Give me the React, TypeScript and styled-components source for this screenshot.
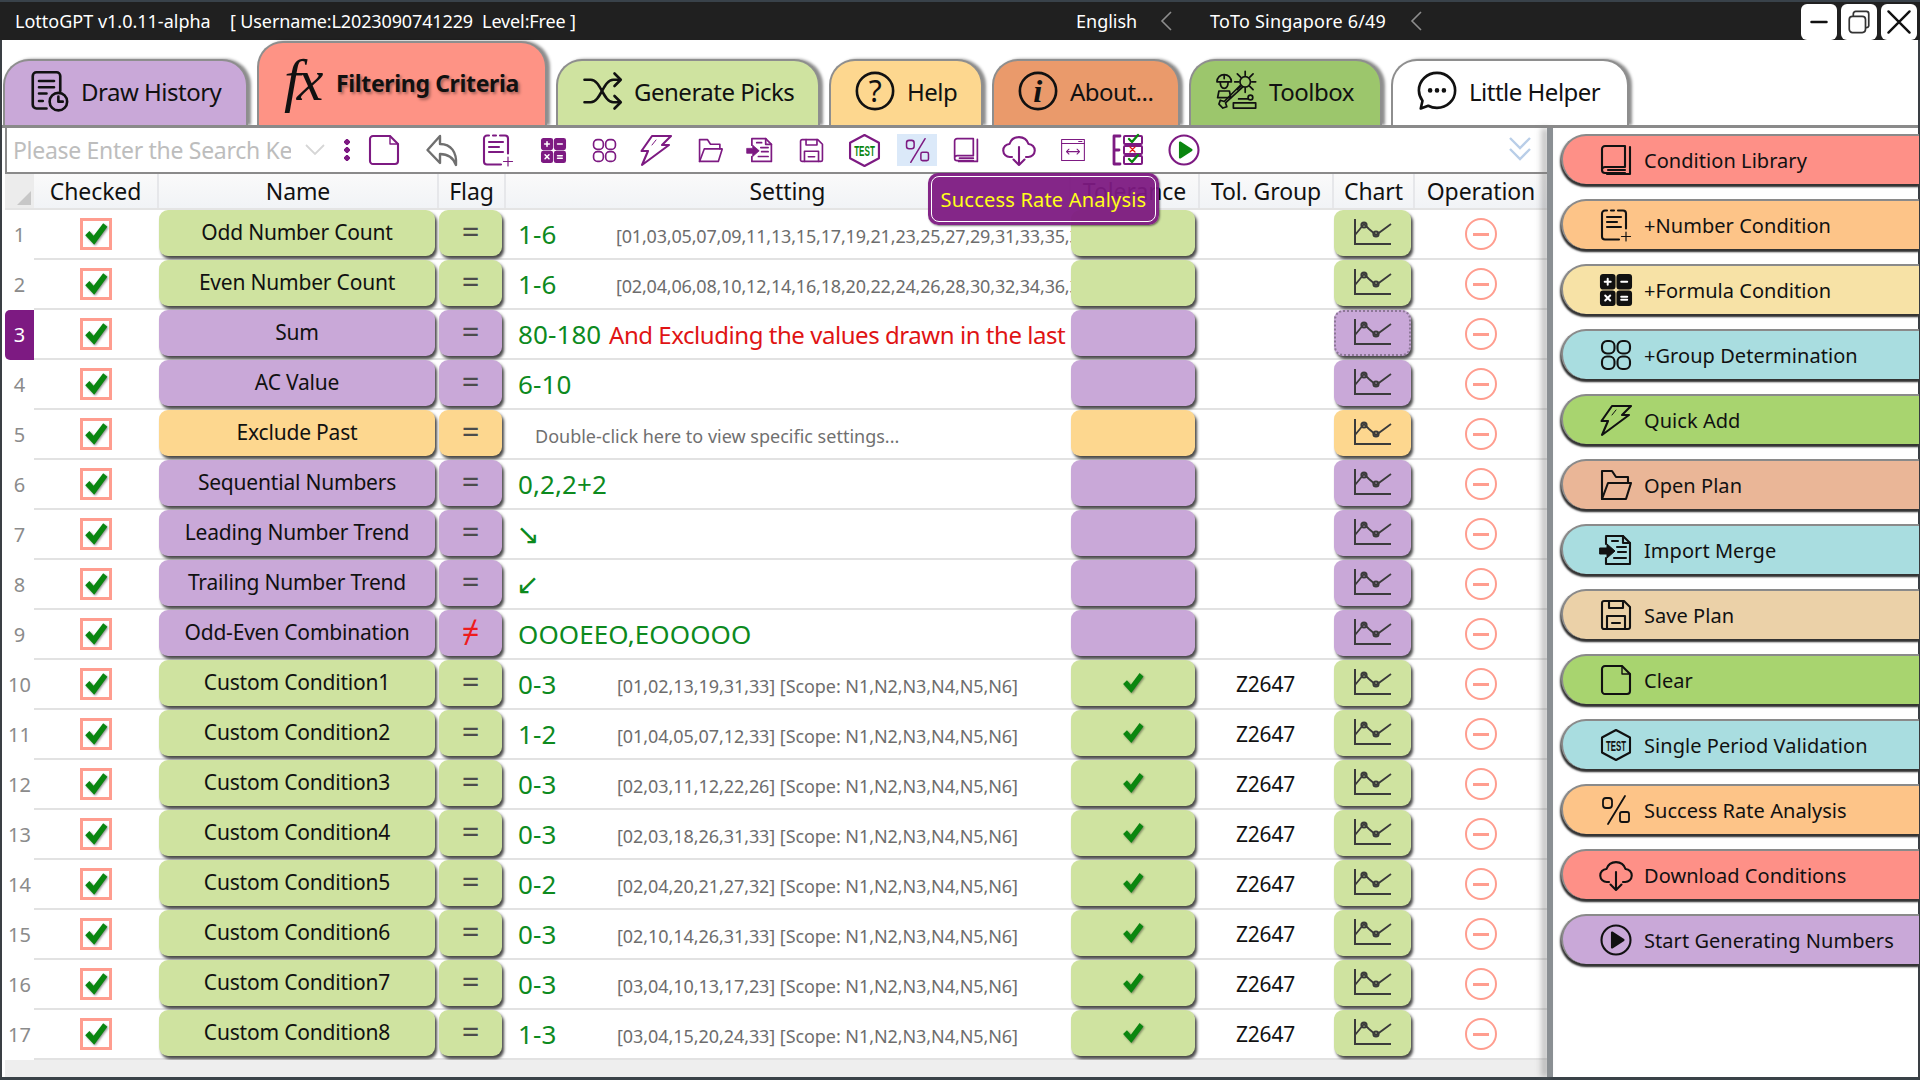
import React from 'react';
import styled, { createGlobalStyle } from 'styled-components';

const Global = createGlobalStyle`
  html, body { margin: 0; padding: 0; width: 1920px; height: 1080px; overflow: hidden; background: #fff; }
  body, button { font-family: "Noto Sans", "Open Sans", sans-serif; color: #111; }
  * { box-sizing: border-box; }
`;

const Win = styled.div`
  width: 1920px; height: 1080px; display: flex; flex-direction: column;
  border-left: 2px solid #3a3f44; border-right: 2px solid #3a3f44; border-bottom: 3px solid #3a4248;
`;
const TitleBar = styled.header`
  height: 40px; margin: 0 -2px; flex: none; background: #202020; border-top: 2px solid #39424a; color: #fff;
  display: flex; align-items: center; padding-left: 15px; font-size: 18px; letter-spacing: 0; white-space: pre;
`;
const AppName = styled.span` width: 215px; `;
const UserInfo = styled.span` width: 846px; letter-spacing: -0.13px; `;
const Lang = styled.span` width: 134px; display: flex; align-items: center; gap: 23px; `;
const Lotto = styled.span` display: flex; align-items: center; gap: 24px; width: 591px; letter-spacing: 0.2px; `;
const Chevron = styled.svg` width: 13px; height: 20px; fill: none; stroke: #8d8d8d; stroke-width: 1.6; `;
const WinControls = styled.div` display: flex; gap: 4px; padding-top: 1px; `;
const WinBtn = styled.button`
  width: 36px; height: 36px; border: 0; border-radius: 6px; background: #fff; padding: 0;
  display: flex; align-items: center; justify-content: center;
`;
const Tabs = styled.nav`
  height: 85px; flex: none; display: flex; align-items: flex-end; gap: 9px; padding-left: 1px;
`;
const Tab = styled.div<{ $bg: string; $w: number; $on?: boolean; $pad: number }>`
  width: ${p => p.$w}px; height: ${p => (p.$on ? 84 : 66)}px; background: ${p => p.$bg};
  border: 2px solid #8e8e8e; border-bottom: 0; border-radius: 26px 26px 0 0;
  box-shadow: 3px 0 3px rgba(0,0,0,.45);
  display: flex; align-items: center; gap: ${p => (p.$on ? 12 : 12)}px; padding-left: ${p => p.$pad}px; padding-bottom: ${p => (p.$on ? 3 : 4)}px;
  font-size: 24px; letter-spacing: -0.5px; white-space: nowrap;
  font-weight: ${p => (p.$on ? 700 : 400)};
  ${p => (p.$on ? 'text-shadow: 2px 2px 3px rgba(0,0,0,.35); font-size: 23px; letter-spacing: -0.35px;' : '')}
`;
const Fx = styled.span`
  display: block; width: 40px; margin-bottom: 6px; font-family: "Liberation Serif", serif; font-style: italic; font-size: 60px; line-height: 1; color: #111; font-weight: 400; text-shadow: none; letter-spacing: -4px;
`;
const Body = styled.main` flex: 1; display: flex; min-height: 0; border-top: 3px solid #8a8a8a; `;
const LeftPanel = styled.section` width: 1545px; display: flex; flex-direction: column; padding-left: 3px; `;
const Toolbar = styled.div`
  height: 46px; flex: none; border-left: 2px solid #8a8a8a; border-bottom: 2px solid #8a8a8a; display: flex; align-items: center; position: relative;
`;
const SearchBox = styled.div`
  width: 278px; margin-left: 6px; overflow: hidden; white-space: nowrap; color: #bdbdbd; font-size: 23px; letter-spacing: -0.3px;
`;
const Caret = styled.svg` width: 22px; height: 12px; margin-left: 13px; fill: none; stroke: #d6d6d6; stroke-width: 1.8; flex: none; `;
const Kebab = styled.span`
  width: 6px; height: 22px; margin-left: 18px; flex: none; color: #7d1a82;
  background: radial-gradient(circle at 3px 3px, currentColor 2.6px, transparent 3px) 0 0 / 6px 8px repeat-y;
`;
const ToolIcons = styled.div` display: flex; align-items: center; margin-left: 14px; `;
const ToolSlot = styled.span<{ $ml: number; $on?: boolean }>`
  width: 40px; height: 32px; margin-left: ${p => p.$ml}px; flex: none; display: flex; align-items: center; justify-content: center;
  color: #7d1a82; background: ${p => (p.$on ? '#dbe9f9' : 'transparent')};
`;
const Collapse = styled.svg` width: 24px; height: 28px; position: absolute; right: 15px; top: 7px; fill: none; stroke: #b9cee8; stroke-width: 2.4; `;

const cols = '125px 280px 67px 565px 129px 134px 81px 1fr';
const HeadRow = styled.div`
  height: 36px; flex: none; display: flex; background: linear-gradient(#fafafa, #f1f3f6); border-bottom: 2px solid #e4e4e4;
`;
const Corner = styled.div`
  width: 29px; flex: none; background: #ececec; position: relative;
  &::after { content: ''; position: absolute; right: 3px; bottom: 3px; border: 7px solid transparent; border-right-color: #c7c7c7; border-bottom-color: #c7c7c7; }
`;
const HeadGrid = styled.div` flex: 1; display: grid; grid-template-columns: ${cols}; `;
const HeadCell = styled.div`
  display: flex; align-items: center; justify-content: center; font-size: 23px; letter-spacing: -0.1px; color: #111;
  border-right: 2px solid #e6e7ea;
  &:last-child { border-right: 0; }
`;
const Rows = styled.div` display: flex; flex-direction: column; flex: none; `;
const Row = styled.div` height: 50px; display: flex; `;
const RowNum = styled.div<{ $sel: boolean }>`
  width: 29px; flex: none; display: flex; align-items: center; justify-content: center; font-size: 20px;
  color: ${p => (p.$sel ? '#fff' : '#8b8b8b')}; background: ${p => (p.$sel ? '#7d1a82' : 'transparent')};
  border-radius: ${p => (p.$sel ? '5px 0 0 5px' : '0')}; padding-bottom: 1px;
`;
const RowGrid = styled.div` flex: 1; display: grid; grid-template-columns: ${cols}; border-bottom: 2px solid #e2e2e2; height: 50px; `;
const Center = styled.div` display: flex; align-items: center; justify-content: center; min-width: 0; `;
const CheckCell = styled(Center)` padding-right: 2px; `;
const CheckBox = styled.span`
  width: 32px; height: 32px; border: 3px solid #ff9d8f; display: flex; align-items: center; justify-content: center;
`;
const RaisedCell = styled.div<{ $gap: number }>` padding-right: ${p => p.$gap}px; min-width: 0; `;
const Raised = styled.div<{ $bg: string; $dotted?: boolean }>`
  height: 46px; background: ${p => p.$bg}; border-radius: 9px; box-shadow: 2px 3px 3px rgba(0,0,0,.72);
  display: flex; align-items: center; justify-content: center; font-size: 21px; color: #111; letter-spacing: -0.2px; white-space: nowrap; padding-bottom: 3px;
  ${p => (p.$dotted ? 'outline: 2px dotted #8c7796; outline-offset: -2px;' : '')}
`;
const FlagMark = styled.span<{ $ne: boolean }>` font-size: 31px; line-height: 1; color: ${p => (p.$ne ? '#ee1c1c' : '#4c4c4c')}; `;
const SettingCell = styled.div`
  display: flex; align-items: center; padding-left: 12px; overflow: hidden; white-space: nowrap;
`;
const Major = styled.span`
  display: inline-block; min-width: 90px; font-size: 26px; color: #0d8a1e; letter-spacing: 0.1px;
`;
const Minor = styled.span<{ $tight: boolean }>`
  margin-left: ${p => (p.$tight ? 8 : 9)}px; font-size: 18px; color: #6d6d6d; letter-spacing: ${p => (p.$tight ? -0.18 : -0.07)}px; padding-top: 4px;
`;
const Warn = styled.span` font-size: 24px; color: #e01414; letter-spacing: -0.45px; margin-left: 1px; `;
const Hint = styled.span` margin-left: 17px; font-size: 18px; color: #707070; letter-spacing: 0; padding-top: 3px; `;
const Arrow = styled.span` font-family: "DejaVu Sans", sans-serif; font-size: 28px; color: #0d8a1e; margin-left: -2px; padding-top: 1px; `;
const Group = styled(Center)` font-size: 21px; letter-spacing: -0.2px; padding-right: 3px; padding-bottom: 1px; `;
const Remove = styled.span`
  width: 32px; height: 32px; border: 2px solid #ff9d8f; border-radius: 50%; display: flex; align-items: center; justify-content: center;
  &::before { content: ''; width: 16px; height: 3px; background: #ff9d8f; }
`;
const Footer = styled.div` flex: 1; background: #eeeeee; `;
const Splitter = styled.div`
  width: 6px; flex: none; background: #8a8f93; box-shadow: -5px 0 6px rgba(120,120,120,.55); position: relative;
`;
const SidePanel = styled.aside` flex: 1; padding: 6px 0 0 8px; display: flex; flex-direction: column; gap: 15px; `;
const SideBtn = styled.button<{ $bg: string }>`
  height: 50px; flex: none; width: calc(100% + 1px); background: ${p => p.$bg}; border: 0; border-top: 2px solid #8a8a8a; border-left: 2px solid #8a8a8a;
  border-radius: 25px 0 0 25px; box-shadow: 0 3px 2px #333, -1px 2px 2px #555;
  display: flex; align-items: center; gap: 12px; padding: 0 0 0 37px; font-size: 20px; color: #111; letter-spacing: 0.05px; white-space: nowrap;
`;
const Tip = styled.div`
  position: absolute; left: 921px; top: 45px; width: 231px; height: 52px; z-index: 5; border-radius: 10px;
  background: rgba(125, 26, 130, .95); box-shadow: 1px 1px 2px rgba(0,0,0,.5);
  display: flex; align-items: center; justify-content: center;
  &::before { content: ''; position: absolute; inset: 3px; border: 1.5px solid #fff; border-radius: 8px; }
  font-size: 20px; color: #ffff19; letter-spacing: 0.2px; white-space: nowrap;
`;
const Glyph = styled.svg<{ $s: number; $c?: string }>`
  width: ${p => p.$s}px; height: ${p => p.$s}px; flex: none; overflow: visible;
  color: ${p => p.$c || 'inherit'}; fill: none; stroke: currentColor; stroke-width: 2.1; stroke-linejoin: round; stroke-linecap: round;
`;
const GlyphLabel = styled.text<{ $green?: boolean }>`
  font-size: 15px; font-family: "Liberation Sans", sans-serif; font-weight: 700; text-anchor: middle; stroke: none;
  fill: ${p => (p.$green ? '#0a860f' : 'currentColor')};
`;
const SerifLabel = styled.text`
  font-size: 26px; font-family: "Liberation Serif", serif; font-style: italic; font-weight: 700; text-anchor: middle; stroke: none; fill: currentColor;
`;
const PlainLabel = styled.text`
  font-size: 24px; font-family: "Noto Sans", sans-serif; text-anchor: middle; stroke: none; fill: currentColor;
`;
const ChartSvg = styled.svg` width: 40px; height: 28px; fill: none; stroke: #3b3b3b; stroke-width: 2; `;
const TickSvg = styled.svg<{ $s: number }>` width: ${p => p.$s}px; height: ${p => p.$s}px; fill: #0a860f; filter: drop-shadow(1px 1px 1px rgba(0,0,0,.45)); `;
const TolTick = styled.span` display: flex; margin-top: 3px; `;

type IconName = 'doc'|'reply'|'num'|'formula'|'group'|'bolt'|'folder'|'import'|'save'|'test'|'percent'|'book'|'cloud'|'width'|'tree'|'play'|'playGreen'|'testGreen'|'history'|'shuffle'|'help'|'info'|'tools'|'chat';

const P: Record<IconName, React.ReactNode> = {
  doc: <><path d="M2 5a3 3 0 0 1 3-3h17l8 8v17a3 3 0 0 1-3 3H5a3 3 0 0 1-3-3z"/><path d="M22 2v8h8" strokeWidth="1.4"/></>,
  reply: <path d="M14 2 1.500 16 14 29v-9c8 0 13 3 16 11 1-13-5-21-16-21z" strokeWidth="2.4"/>,
  num: <><path d="M7 1.500H5a3 3 0 0 0-3 3v23a3 3 0 0 0 3 3h14"/><path d="M11 1.500h3M18 1.500h5a3 3 0 0 1 3 3v15"/><path d="M7 8h14M7 13h10M7 18h14"/><path d="M26 23v9M21.500 27.500h9" strokeWidth="1.2"/></>,
  formula: <>
    <rect x="1" y="1" width="13.500" height="13.500" rx="2" fill="currentColor"/><rect x="17.500" y="1" width="13.500" height="13.500" rx="2" fill="currentColor"/>
    <rect x="1" y="17.500" width="13.500" height="13.500" rx="2" fill="currentColor"/><rect x="17.500" y="17.500" width="13.500" height="13.500" rx="2" fill="currentColor"/>
    <path d="M7.700 4.700v6M4.700 7.700h6M21.200 7.700h6M5.200 21.500l5 5M10.200 21.500l-5 5M21.200 22.700h6M21.200 25.800h6" stroke="#fff" strokeWidth="2"/></>,
  group: <><rect x="2" y="2" width="12.500" height="12.500" rx="5"/><rect x="17.500" y="2" width="12.500" height="12.500" rx="5"/><rect x="2" y="17.500" width="12.500" height="12.500" rx="5"/><rect x="17.500" y="17.500" width="12.500" height="12.500" rx="5"/></>,
  bolt: <><path d="M12 2h19l-9 9h7L2 31l6-14H1.500z"/><path d="M16 6l-4 5" strokeWidth="1"/></>,
  folder: <><path d="M2 30V2h10l4 6h12v6"/><path d="M2 30h24l5-16H8z"/></>,
  import: <><path d="M6 10V2h17l7 7v21H6v-6"/><path d="M23 2v7h7M18 7h-6M17 13h9M18 18h8M14 24h12"/><path d="M0 14h7v-4l8 7-8 7v-4H0z" fill="currentColor" strokeWidth="1"/></>,
  save: <><path d="M2 4a2 2 0 0 1 2-2h20l6 6v20a2 2 0 0 1-2 2H4a2 2 0 0 1-2-2z"/><path d="M9 2v7h14V2M7 30V17h18v13M12 24h8"/></>,
  test: <><path d="M16 1 30 8.500v15L16 31 2 23.500v-15z"/><GlyphLabel x="16" y="21.500" textLength="20" lengthAdjust="spacingAndGlyphs">TEST</GlyphLabel></>,
  testGreen: <><path d="M16 1 30 8.500v15L16 31 2 23.500v-15z"/><GlyphLabel $green x="16" y="21.500" textLength="20" lengthAdjust="spacingAndGlyphs">TEST</GlyphLabel></>,
  percent: <g strokeWidth="1.800"><rect x="3" y="4" width="9" height="10" rx="3"/><path d="M25 2 8 30"/><rect x="20" y="18" width="9" height="10" rx="2"/></g>,
  book: <><path d="M2 26V5a3 3 0 0 1 3-3h20v21H5a3 3 0 0 0-3 3 3 3 0 0 0 3 3h20"/><path d="M30 3v27H7M8 26h17"/></>,
  cloud: <><path d="M9 23H7a6 6 0 0 1-.5-13A10 10 0 0 1 25.500 10a6 6 0 0 1-.5 13h-2"/><path d="M16 13v17.500M10.500 25.500l5.500 5.500 5.500-5.500"/></>,
  width: <g strokeWidth="1.300"><rect x="2" y="3" width="28" height="26"/><path d="M2 8h28M8 18h16M11 15l-3 3 3 3M21 15l3 3-3 3M23 5.500h4"/></g>,
  tree: <><path d="M9 2H3v28h6M3 16h5" strokeWidth="2.800"/><g strokeWidth="2"><rect x="13" y="2" width="18" height="8" rx="1"/><rect x="13" y="12" width="18" height="8" rx="1"/><rect x="13" y="22" width="18" height="8" rx="1"/></g>
    <path d="M18 5l3 3 6-7M18 25l3 3 6-7" stroke="#0a860f" strokeWidth="2.400"/><path d="M19 13l5 5M24 13l-5 5" stroke="#e01414" strokeWidth="1.200"/></>,
  play: <><circle cx="16" cy="16" r="14.500"/><path d="M12 8.500 23.500 16 12 23.500z" fill="currentColor"/></>,
  playGreen: <><circle cx="16" cy="16" r="14.500"/><path d="M12 8.500 23.500 16 12 23.500z" fill="#0a860f" stroke="#0a860f"/></>,
  history: <><path d="M14 30H6a3 3 0 0 1-3-3V4a3 3 0 0 1 3-3h16a3 3 0 0 1 3 3v12"/><path d="M8 8h12M8 13h12M8 18h6M8 24h3"/><circle cx="23.500" cy="24.500" r="7"/><path d="M23.500 20.500v4h3.500"/></>,
  shuffle: <><path d="M2 7h5c8 0 10 18 18 18h5M2 25h5c8 0 10-18 18-18h5"/><path d="M26 2l5 5-5 5M26 20l5 5-5 5"/></>,
  help: <><circle cx="16" cy="16" r="14.500"/><PlainLabel x="16" y="24.500">?</PlainLabel></>,
  info: <><circle cx="16" cy="16" r="14.500"/><SerifLabel x="15.500" y="25">i</SerifLabel></>,
  tools: <g strokeWidth="1.300"><path d="M1.500 9a5.500 5.500 0 0 1 11 0zM4 9c0 3 1 5 3 5s3-2 3-5M7 3.500v3M3 16h8M3 16l-1 5h10l-1-5"/><circle cx="23" cy="9" r="4"/><path d="M23 1v3M23 14v3M15 9h3M28 9h3M17 3l2.500 2.500M26.500 12.500 29 15M17 15l2.500-2.500M26.500 5.500 29 3"/><path d="M19 12 7 24l-3-1-1 3 3 3 3-1-1-3 13-12" /><circle cx="27" cy="21" r="1.800"/><path d="M14 25h17v4H14zM18 22h7"/></g>,
  chat: <><path d="M16 1.500c8 0 14.500 6.200 14.500 14s-6.500 14-14.500 14c-2.500 0-5-.6-7-1.700L3 30l1.400-6.200A14 14 0 0 1 1.500 15.500C1.500 7.700 8 1.500 16 1.500z"/><circle cx="10.500" cy="15.500" r=".8" fill="currentColor"/><circle cx="16" cy="15.500" r=".8" fill="currentColor"/><circle cx="21.500" cy="15.500" r=".8" fill="currentColor"/></>,
};

const Icon = ({ n, s, c }: { n: IconName; s: number; c?: string }) => (
  <Glyph viewBox="0 0 32 32" $s={s} $c={c}>{P[n]}</Glyph>
);
const Tick = ({ s }: { s: number }) => (
  <TickSvg viewBox="0 0 20 20" $s={s}><path d="M1 11 4.500 7.500 8 11.500 16 1l3.500 3L8.500 19z"/></TickSvg>
);
const ChartIcon = () => (
  <ChartSvg viewBox="0 0 40 28">
    <path d="M2 1v25h36"/><path d="M2 17 11 6l5 5 7 6 15-11" strokeWidth="1.8"/>
    <circle cx="11" cy="7" r="2.600" /><circle cx="23" cy="16" r="2.600"/>
  </ChartSvg>
);

const G = '#cfe3a0', V = '#c9a8d8', O = '#fdd78f';
type RowData = { name: string; bg: string; major?: string; minor?: string; kind?: 'warn'|'hint'|'down'|'up'; ne?: boolean; ok?: boolean };
const custom: [string, string][] = [
  ['0-3','[01,02,13,19,31,33]'],['1-2','[01,04,05,07,12,33]'],['0-3','[02,03,11,12,22,26]'],['0-3','[02,03,18,26,31,33]'],
  ['0-2','[02,04,20,21,27,32]'],['0-3','[02,10,14,26,31,33]'],['0-3','[03,04,10,13,17,23]'],['1-3','[03,04,15,20,24,33]'],
];
const rows: RowData[] = [
  { name: 'Odd Number Count', bg: G, major: '1-6', minor: '[01,03,05,07,09,11,13,15,17,19,21,23,25,27,29,31,33,35,37,39,41,43,45,47,49]' },
  { name: 'Even Number Count', bg: G, major: '1-6', minor: '[02,04,06,08,10,12,14,16,18,20,22,24,26,28,30,32,34,36,38,40,42,44,46,48]' },
  { name: 'Sum', bg: V, major: '80-180', kind: 'warn' },
  { name: 'AC Value', bg: V, major: '6-10' },
  { name: 'Exclude Past', bg: O, kind: 'hint' },
  { name: 'Sequential Numbers', bg: V, major: '0,2,2+2' },
  { name: 'Leading Number Trend', bg: V, kind: 'down' },
  { name: 'Trailing Number Trend', bg: V, kind: 'up' },
  { name: 'Odd-Even Combination', bg: V, major: 'OOOEEO,EOOOOO', ne: true },
  ...custom.map(([major, nums], i) => ({
    name: `Custom Condition${i + 1}`, bg: G, major, minor: `${nums} [Scope: N1,N2,N3,N4,N5,N6]`, ok: true,
  })),
];
const heads = ['Checked','Name','Flag','Setting','Tolerance','Tol. Group','Chart','Operation'];
const tools: { n: IconName; ml: number; s: number; c?: string; on?: boolean }[] = [
  { n: 'doc', ml: 0, s: 32 }, { n: 'reply', ml: 18, s: 32, c: '#6f6f6f' }, { n: 'num', ml: 16, s: 32 }, { n: 'formula', ml: 15, s: 25 },
  { n: 'group', ml: 11, s: 25 }, { n: 'bolt', ml: 12, s: 32 }, { n: 'folder', ml: 14, s: 25 }, { n: 'import', ml: 10, s: 26 },
  { n: 'save', ml: 11, s: 25 }, { n: 'testGreen', ml: 13, s: 33 }, { n: 'percent', ml: 13, s: 27, on: true }, { n: 'book', ml: 9, s: 26 },
  { n: 'cloud', ml: 13, s: 32 }, { n: 'width', ml: 14, s: 26 }, { n: 'tree', ml: 14, s: 32 }, { n: 'playGreen', ml: 17, s: 32 },
];
const side: { t: string; bg: string; n: IconName }[] = [
  { t: 'Condition Library', bg: '#fe9087', n: 'book' }, { t: '+Number Condition', bg: '#fdc488', n: 'num' },
  { t: '+Formula Condition', bg: '#f7e2a6', n: 'formula' }, { t: '+Group Determination', bg: '#a9dde0', n: 'group' },
  { t: 'Quick Add', bg: '#a8d46f', n: 'bolt' }, { t: 'Open Plan', bg: '#eab697', n: 'folder' },
  { t: 'Import Merge', bg: '#a9dde0', n: 'import' }, { t: 'Save Plan', bg: '#ebd1a8', n: 'save' },
  { t: 'Clear', bg: '#a8d46f', n: 'doc' }, { t: 'Single Period Validation', bg: '#a9dde0', n: 'test' },
  { t: 'Success Rate Analysis', bg: '#fdc488', n: 'percent' }, { t: 'Download Conditions', bg: '#fe9087', n: 'cloud' },
  { t: 'Start Generating Numbers', bg: '#c9a8d8', n: 'play' },
];
const Left = () => <Chevron viewBox="0 0 13 20"><path d="M11 1 2 10l9 9"/></Chevron>;

export default function App() {
  return (
    <Win>
      <Global />
      <TitleBar>
        <AppName>LottoGPT v1.0.11-alpha</AppName>
        <UserInfo>[ Username:L2023090741229  Level:Free ]</UserInfo>
        <Lang>English<Left /></Lang>
        <Lotto>ToTo Singapore 6/49<Left /></Lotto>
        <WinControls>
          <WinBtn aria-label="min"><Glyph viewBox="0 0 32 32" $s={20} $c="#111"><path d="M4 16h24" strokeWidth="4"/></Glyph></WinBtn>
          <WinBtn aria-label="max"><Glyph viewBox="0 0 32 32" $s={26} $c="#333"><rect x="4" y="9" width="20" height="20" rx="4"/><path d="M9 8V6a3 3 0 0 1 3-3h13a3 3 0 0 1 3 3v15a3 3 0 0 1-3 2" /></Glyph></WinBtn>
          <WinBtn aria-label="close"><Glyph viewBox="0 0 32 32" $s={26} $c="#111"><path d="M3 3l26 26M29 3 3 29" strokeWidth="3"/></Glyph></WinBtn>
        </WinControls>
      </TitleBar>
      <Tabs>
        <Tab $bg="#c9a8d8" $w={245} $pad={24}><Icon n="history" s={40} />Draw History</Tab>
        <Tab $bg="#fe9385" $w={290} $pad={25} $on><Fx>fx</Fx>Filtering Criteria</Tab>
        <Tab $bg="#cfe3a0" $w={264} $pad={24}><Icon n="shuffle" s={40} />Generate Picks</Tab>
        <Tab $bg="#fdd78f" $w={154} $pad={24}><Icon n="help" s={40} />Help</Tab>
        <Tab $bg="#ea9a6b" $w={188} $pad={24}><Icon n="info" s={40} />About...</Tab>
        <Tab $bg="#9cc66c" $w={193} $pad={24}><Icon n="tools" s={42} />Toolbox</Tab>
        <Tab $bg="#fff" $w={238} $pad={24}><Icon n="chat" s={40} />Little Helper</Tab>
      </Tabs>
      <Body>
        <LeftPanel>
          <Toolbar>
            <SearchBox>Please Enter the Search Keywords</SearchBox>
            <Caret viewBox="0 0 22 12"><path d="M2 1l9 9 9-9"/></Caret>
            <Kebab />
            <ToolIcons>
              {tools.map(t => (
                <ToolSlot key={t.n} $ml={t.ml} $on={t.on}><Icon n={t.n} s={t.s} c={t.c} /></ToolSlot>
              ))}
            </ToolIcons>
            <Collapse viewBox="0 0 24 28"><path d="M2 3l10 10L22 3M2 14l10 10 10-10"/></Collapse>
            <Tip>Success Rate Analysis</Tip>
          </Toolbar>
          <HeadRow>
            <Corner />
            <HeadGrid>{heads.map(h => <HeadCell key={h}>{h}</HeadCell>)}</HeadGrid>
          </HeadRow>
          <Rows>
            {rows.map((r, i) => (
              <Row key={r.name}>
                <RowNum $sel={i === 2}>{i + 1}</RowNum>
                <RowGrid>
                  <CheckCell><CheckBox><Tick s={24} /></CheckBox></CheckCell>
                  <RaisedCell $gap={4}><Raised $bg={r.bg}>{r.name}</Raised></RaisedCell>
                  <RaisedCell $gap={4}><Raised $bg={r.bg}><FlagMark $ne={!!r.ne}>{r.ne ? '≠' : '='}</FlagMark></Raised></RaisedCell>
                  <SettingCell>
                    {r.major && <Major>{r.major}</Major>}
                    {r.minor && <Minor $tight={!r.ok}>{r.minor}</Minor>}
                    {r.kind === 'warn' && <Warn>And Excluding the values drawn in the last</Warn>}
                    {r.kind === 'hint' && <Hint>Double-click here to view specific settings...</Hint>}
                    {r.kind === 'down' && <Arrow>↘</Arrow>}
                    {r.kind === 'up' && <Arrow>↙</Arrow>}
                  </SettingCell>
                  <RaisedCell $gap={5}><Raised $bg={r.bg}>{r.ok && <TolTick><Tick s={22} /></TolTick>}</Raised></RaisedCell>
                  <Group>{r.ok ? 'Z2647' : ''}</Group>
                  <RaisedCell $gap={4}><Raised $bg={r.bg} $dotted={i === 2}><ChartIcon /></Raised></RaisedCell>
                  <Center><Remove /></Center>
                </RowGrid>
              </Row>
            ))}
          </Rows>
          <Footer />
        </LeftPanel>
        <Splitter />
        <SidePanel>
          {side.map(b => (
            <SideBtn key={b.t} $bg={b.bg}><Icon n={b.n} s={32} />{b.t}</SideBtn>
          ))}
        </SidePanel>
      </Body>
    </Win>
  );
}
